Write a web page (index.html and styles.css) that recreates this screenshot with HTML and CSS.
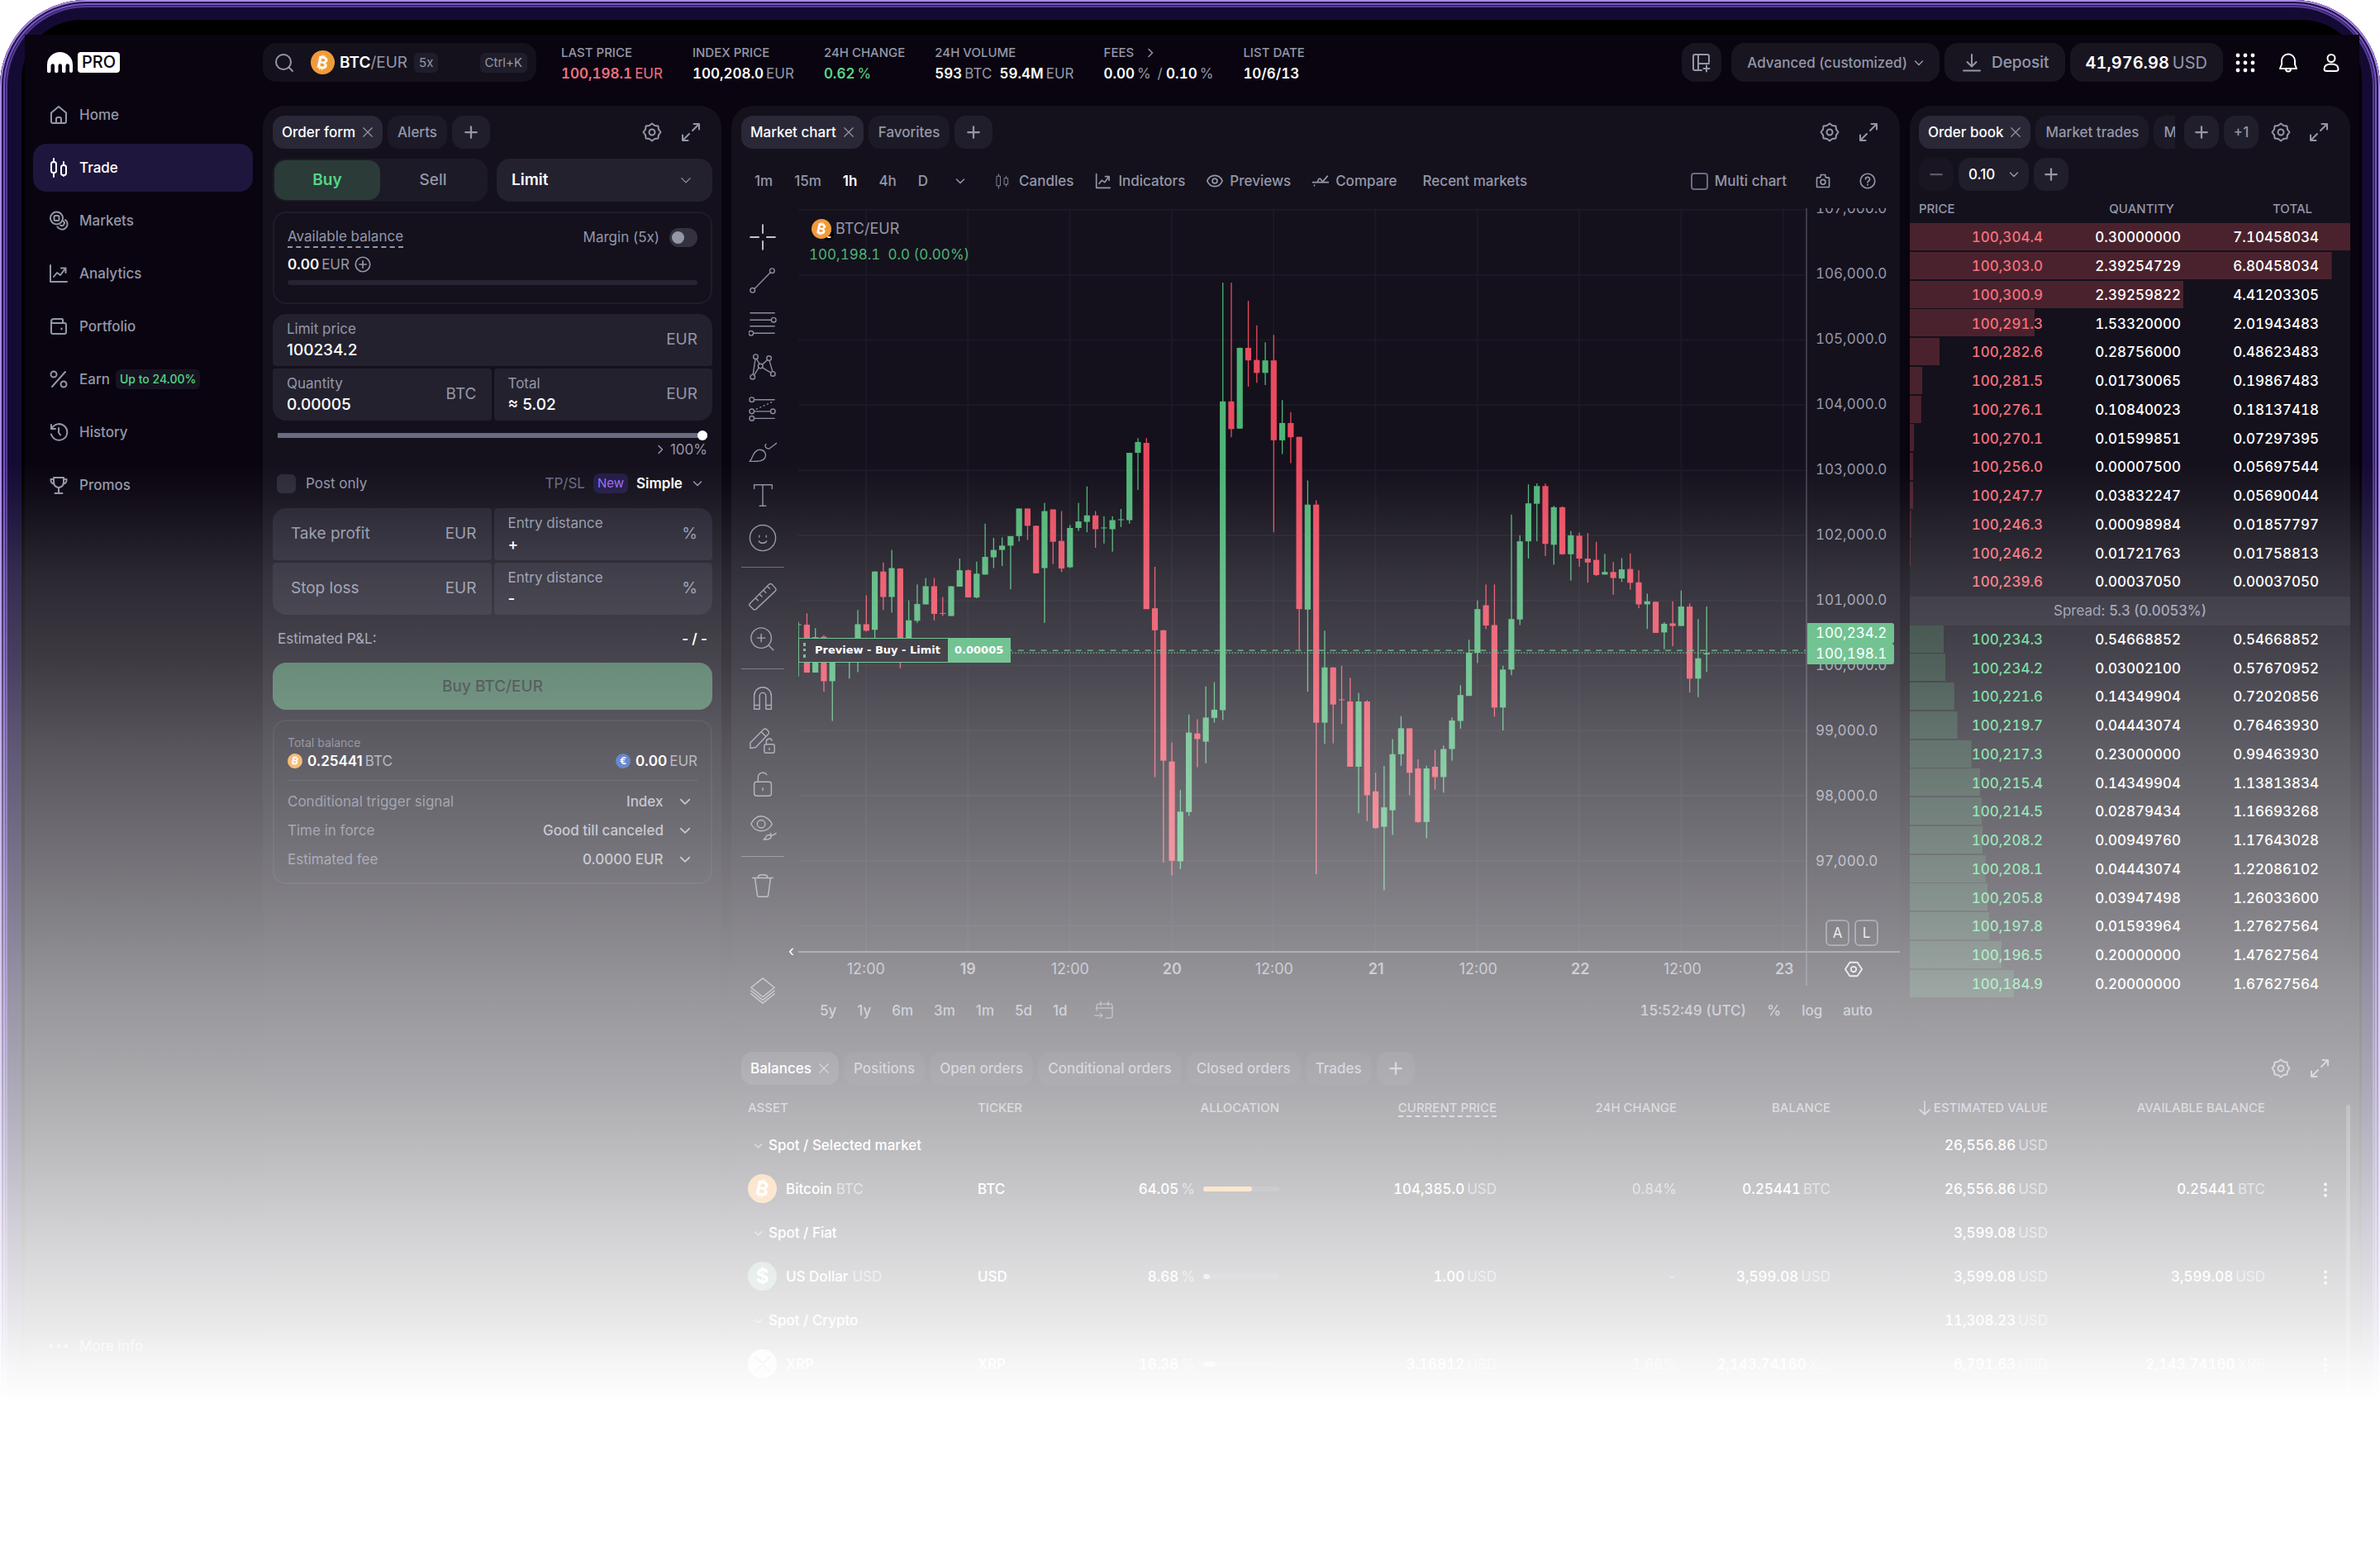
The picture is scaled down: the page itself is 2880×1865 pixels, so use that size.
FILE: index.html
```html
<!DOCTYPE html>
<html lang="en">
<head>
    <meta charset="UTF-8">
    <meta name="viewport" content="width=device-width, initial-scale=1.0">
    <title>BTC/EUR - Pro</title>
    <link rel="stylesheet" href="styles.css">
</head>
<body>
<svg class="sprite" aria-hidden="true">
    <symbol id="i-home" viewBox="0 0 24 24"><path d="M3 9.500 12 2l9 7.500V20a2 2 0 0 1-2 2H5a2 2 0 0 1-2-2z"/><path d="M9 22v-5a2 2 0 0 1 2-2h2a2 2 0 0 1 2 2v5"/></symbol>
    <symbol id="i-trade" viewBox="0 0 24 24"><rect x="3" y="5" width="6" height="13" rx="2.500"/><path d="M6 1v4M6 18v5"/><rect x="15" y="9" width="6" height="12" rx="2.500"/><path d="M18 5v4M18 21v1"/></symbol>
    <symbol id="i-markets" viewBox="0 0 24 24"><circle cx="9.500" cy="9" r="7.500"/><rect x="6.500" y="6" width="6" height="6" rx="1.500"/><path d="M20 11a6.500 6.500 0 1 1-9.500 8.500"/><path d="M17.500 12.500a3 3 0 0 1-3.500 5"/></symbol>
    <symbol id="i-chart" viewBox="0 0 24 24"><path d="M2 2v20h20"/><path d="M6 16l4-5 4 3 6-8"/><path d="M15 5.500h5.500V11"/></symbol>
    <symbol id="i-wallet" viewBox="0 0 24 24"><path d="M3 6v13a2 2 0 0 0 2 2h14a2 2 0 0 0 2-2V10a2 2 0 0 0-2-2H5a2 2 0 0 1-2-2 3 3 0 0 1 3-3h10a1 1 0 0 1 1 1v4"/><path d="M15.500 14.500v1"/></symbol>
    <symbol id="i-percent" viewBox="0 0 24 24"><path d="M20 3 4 21"/><circle cx="6" cy="6" r="3.500"/><circle cx="18" cy="18" r="3.500"/></symbol>
    <symbol id="i-history" viewBox="0 0 24 24"><path d="M3 3v5h5"/><path d="M3.500 8A9.800 9.800 0 1 1 3 14.500"/><path d="M12 7v5.500l2 3"/></symbol>
    <symbol id="i-trophy" viewBox="0 0 24 24"><path d="M6 3h12v6a6 6 0 0 1-12 0z"/><path d="M6 5H2.500v1a4.500 4.500 0 0 0 4 4.500M18 5h3.500v1a4.500 4.500 0 0 1-4 4.500M12 15v6M7.500 22h9"/></symbol>
    <symbol id="i-search" viewBox="0 0 24 24"><circle cx="11" cy="11" r="9"/><path d="M17.500 17.500 22 22"/></symbol>
    <symbol id="i-gear" viewBox="0 0 24 24"><path d="M12 1.500 15.300 4 19.400 4.600 20 8.700 22.500 12 20 15.300 19.400 19.400 15.300 20 12 22.500 8.700 20 4.600 19.400 4 15.300 1.500 12 4 8.700 4.600 4.600 8.700 4z"/><circle cx="12" cy="12" r="3.500"/></symbol>
    <symbol id="i-expand" viewBox="0 0 24 24"><path d="M14 10l8-8M15.500 2H22v6.500M10 14l-8 8M2 15.500V22h6.500"/></symbol>
    <symbol id="i-x" viewBox="0 0 24 24"><path d="M3 3l18 18M21 3 3 21"/></symbol>
    <symbol id="i-plus" viewBox="0 0 24 24"><path d="M12 3v18M3 12h18"/></symbol>
    <symbol id="i-minus" viewBox="0 0 24 24"><path d="M3 12h18"/></symbol>
    <symbol id="i-down" viewBox="0 0 24 24"><path d="M3 8l9 9 9-9"/></symbol>
    <symbol id="i-right" viewBox="0 0 24 24"><path d="M8 3l9 9-9 9"/></symbol>
    <symbol id="i-circle-plus" viewBox="0 0 24 24"><circle cx="12" cy="12" r="10.500"/><path d="M12 7v10M7 12h10"/></symbol>
    <symbol id="i-layout" viewBox="0 0 24 24"><path d="M21 11V4a2 2 0 0 0-2-2H4a2 2 0 0 0-2 2v15a2 2 0 0 0 2 2h8M8 2v19M8 13h13M18 15.500v7M14.500 19h7"/></symbol>
    <symbol id="i-deposit" viewBox="0 0 24 24"><path d="M12 2v14M6.500 11l5.500 5.500 5.500-5.500M2 21.500h20"/></symbol>
    <symbol id="i-apps" viewBox="0 0 24 24"><g fill="currentColor" stroke="none"><circle cx="3" cy="3" r="2.400"/><circle cx="12" cy="3" r="2.400"/><circle cx="21" cy="3" r="2.400"/><circle cx="3" cy="12" r="2.400"/><circle cx="12" cy="12" r="2.400"/><circle cx="21" cy="12" r="2.400"/><circle cx="3" cy="21" r="2.400"/><circle cx="12" cy="21" r="2.400"/><circle cx="21" cy="21" r="2.400"/></g></symbol>
    <symbol id="i-bell" viewBox="0 0 24 24"><path d="M4 9.500a8 8 0 0 1 16 0V14l2 5H2l2-5z"/><path d="M9 19.500a3 3 0 0 0 6 0"/></symbol>
    <symbol id="i-user" viewBox="0 0 24 24"><circle cx="12" cy="6.500" r="4.500"/><path d="M3.500 19.500c0-4 3.500-6 8.500-6s8.500 2 8.500 6c0 2-1.500 2.500-3 2.500h-11c-1.500 0-3-.5-3-2.500z"/></symbol>
    <symbol id="i-candles" viewBox="0 0 24 24"><path d="M4 5h5v14H4zM6.500 2v3M6.500 19v4M15 8h5v9h-5zM17.500 5v3M17.500 17v3"/></symbol>
    <symbol id="i-eye" viewBox="0 0 24 24"><path d="M1 12c2-5 6-8 11-8s9 3 11 8c-2 5-6 8-11 8s-9-3-11-8z"/><circle cx="12" cy="12" r="3.500"/></symbol>
    <symbol id="i-compare" viewBox="0 0 24 24"><path d="M-1 14h26M8 12c2-5 4-4 6 0M15 13l7-8M3 18v1"/></symbol>
    <symbol id="i-camera" viewBox="0 0 24 24"><path d="M4 7h4l1-4h6l1 4h4a1 1 0 0 1 1 1v12a1 1 0 0 1-1 1H4a1 1 0 0 1-1-1V8a1 1 0 0 1 1-1z"/><circle cx="12" cy="13.500" r="3.500"/></symbol>
    <symbol id="i-help" viewBox="0 0 24 24"><circle cx="12" cy="12" r="10.500"/><path d="M9 9.500a3 3 0 1 1 4.500 2.500c-1 .6-1.500 1-1.500 2M12 17v1"/></symbol>
    <symbol id="i-dots" viewBox="0 0 24 24"><g fill="currentColor" stroke="none"><circle cx="3" cy="12" r="2.300"/><circle cx="12" cy="12" r="2.300"/><circle cx="21" cy="12" r="2.300"/></g></symbol>
    <symbol id="i-kebab" viewBox="0 0 24 24"><g fill="currentColor" stroke="none"><circle cx="12" cy="3" r="2.600"/><circle cx="12" cy="12" r="2.600"/><circle cx="12" cy="21" r="2.600"/></g></symbol>
    <symbol id="i-sort" viewBox="0 0 24 24"><path d="M12 1v21M4 14.500l8 8 8-8"/></symbol>
    <symbol id="i-xrp" viewBox="0 0 24 24"><path d="M3 3l5.500 5.500q3.500 3.500 7 0L21 3M3 21l5.500-5.500q3.500-3.500 7 0L21 21"/></symbol>
    <!-- drawing tools -->
    <symbol id="t-cross" viewBox="0 0 36 36"><path d="M18 2v11M18 23v11M2 18h11M23 18h11"/></symbol>
    <symbol id="t-line" viewBox="0 0 36 36"><circle cx="5" cy="31" r="3"/><circle cx="30" cy="6" r="3"/><path d="M7.500 29 28 8"/></symbol>
    <symbol id="t-fib" viewBox="0 0 36 36"><path d="M2 5h31M2 14h27M2 22h31M6 31h27"/><circle cx="32" cy="14" r="3"/><circle cx="3" cy="31" r="3"/></symbol>
    <symbol id="t-pattern" viewBox="0 0 36 36"><circle cx="5" cy="32" r="3"/><circle cx="9" cy="6" r="3"/><circle cx="15" cy="18" r="3"/><circle cx="26" cy="8" r="3"/><circle cx="31" cy="28" r="3"/><path d="M5.500 29 8.500 9M10 9l4 6.500M17.500 16 24 10M26.500 11l4 14M17.500 20l11 6.500M13 20 7 29.500"/></symbol>
    <symbol id="t-range" viewBox="0 0 36 36"><circle cx="4" cy="6" r="3"/><circle cx="4" cy="21" r="3"/><circle cx="4" cy="30" r="3"/><circle cx="31" cy="21" r="3"/><path d="M7 6h26M7 21h21M7 30h26"/><path d="M10 18 30 9" stroke-dasharray="1 4"/></symbol>
    <symbol id="t-brush" viewBox="0 0 36 36"><path d="M1 30c4-2 4-14 13-15 6 0 9 5 7 10-3 6-12 5-20 5zM22 8c-2 3 0 6 4 6L38 5"/></symbol>
    <symbol id="t-text" viewBox="0 0 36 36"><path d="M7 10V5h23v5M18 5v27M14 32h8"/></symbol>
    <symbol id="t-smile" viewBox="0 0 36 36"><circle cx="18" cy="18" r="16.500"/><path d="M13 22c2 3.500 8 3.500 10 0M13.500 15v2M22.500 15v2"/></symbol>
    <symbol id="t-ruler" viewBox="0 0 36 36"><path d="M1.500 27 26 2.500q2-2 4 0L34 7q2 2 0 4L9.500 34q-2 1.500-4 0L1.500 30q-1.500-1.500 0-3zM9 20l3 3M14 15l3 3M19 10l3 3M24 5l3 3"/></symbol>
    <symbol id="t-zoom" viewBox="0 0 36 36"><circle cx="16" cy="16" r="13"/><path d="M25.500 25.500l6 6M16 11v10M11 16h10"/></symbol>
    <symbol id="t-magnet" viewBox="0 0 36 36"><path d="M7 32V15a11 11 0 0 1 22 0v17h-7V15a4 4 0 0 0-8 0v17zM7 27h7M22 27h7"/></symbol>
    <symbol id="t-pencil" viewBox="0 0 36 36"><path d="M2 27v-7L19 3q2-2 4 0l2 2q2 2 0 4L9 26zM16 6l6 6"/><rect x="20" y="22" width="13" height="11" rx="2"/><path d="M22.500 22v-3a4 4 0 0 1 7.500-2M26.500 27v2"/></symbol>
    <symbol id="t-lock" viewBox="0 0 36 36"><rect x="7" y="15" width="22" height="18" rx="3"/><path d="M12 15v-6a6 6 0 0 1 11-3M18 23v3"/></symbol>
    <symbol id="t-hide" viewBox="0 0 36 36"><path d="M3 14c3-6 8-10 13-10s11 4 14 10c-3 6-8 9-14 9S6 20 3 14z"/><circle cx="16" cy="14" r="5"/><path d="M19 34c3-1 3-6 6-6s5 2 3 4-6 2-9 2zM28 26c0 2 2 3 4 2l3-2"/></symbol>
    <symbol id="t-trash" viewBox="0 0 36 36"><path d="M5 8h26M12 8q0-4 4-4h4q4 0 4 4M8 8l3 22q.3 2 2 2h10q2 0 2-2L28 8"/></symbol>
    <symbol id="t-layers" viewBox="0 0 36 36"><path d="M18 2 33 14 18 26 3 14zM3 18l15 12 15-12M3 22l15 12 15-12"/></symbol>
    <symbol id="t-goto" viewBox="0 0 24 24"><path d="M3 12V6q0-2 2-2h15q2 0 2 2v13q0 2-2 2h-6M3 9h19M8 1v5M17 1v5M0 18h10M7 15l3 3-3 3"/></symbol>
    <symbol id="t-hex" viewBox="0 0 24 24"><path d="M7 3h10l6 9-6 9H7l-6-9z"/><circle cx="12" cy="12" r="3.500"/></symbol>
</svg>

<div class="device">
<div class="screen">
<div class="app">
    <aside class="sidebar">
        <a class="logo" href="#" aria-label="Pro">
            <svg viewBox="0 0 31 25"><path d="M0 15.500a15.500 15.500 0 0 1 31 0V23a2 2 0 0 1-4 0v-6.500a2.200 2.200 0 0 0-4.500 0V23a2 2 0 0 1-4.500 0v-6.500a2.200 2.200 0 0 0-4.500 0V23a2 2 0 0 1-4.500 0v-6.500a2.200 2.200 0 0 0-4.500 0V23a2 2 0 0 1-4.500 0z"/></svg>
            <span>PRO</span>
        </a>
        <nav class="nav">
            <a href="#"><svg class="icon"><use href="#i-home"/></svg>Home</a>
            <a href="#" class="active"><svg class="icon"><use href="#i-trade"/></svg>Trade</a>
            <a href="#"><svg class="icon"><use href="#i-markets"/></svg>Markets</a>
            <a href="#"><svg class="icon"><use href="#i-chart"/></svg>Analytics</a>
            <a href="#"><svg class="icon"><use href="#i-wallet"/></svg>Portfolio</a>
            <a href="#"><svg class="icon"><use href="#i-percent"/></svg>Earn <span class="earn-badge">Up to 24.00%</span></a>
            <a href="#"><svg class="icon"><use href="#i-history"/></svg>History</a>
            <a href="#"><svg class="icon"><use href="#i-trophy"/></svg>Promos</a>
            <a href="#" class="more"><svg class="icon"><use href="#i-dots"/></svg>More info</a>
        </nav>
    </aside>

    <main class="main">
        <header class="topbar">
            <button class="market-search">
                <svg class="icon"><use href="#i-search"/></svg>
                <span class="coin coin-m btc">₿</span>
                <span class="pair"><b>BTC</b>/EUR</span>
                <span class="tag">5x</span>
                <span class="tag shortcut">Ctrl+K</span>
            </button>
            <dl class="stats">
                <div><dt>LAST PRICE</dt><dd class="num red">100,198.1<i>EUR</i></dd></div>
                <div><dt>INDEX PRICE</dt><dd class="num">100,208.0<i>EUR</i></dd></div>
                <div><dt>24H CHANGE</dt><dd class="num green">0.62<i>%</i></dd></div>
                <div><dt>24H VOLUME</dt><dd class="num">593<i>BTC</i> &nbsp;59.4M<i>EUR</i></dd></div>
                <div><dt>FEES <svg class="icon tiny"><use href="#i-right"/></svg></dt><dd class="num">0.00<i>%</i> <i>/</i> 0.10<i>%</i></dd></div>
                <div><dt>LIST DATE</dt><dd class="num">10/6/13</dd></div>
            </dl>
            <div class="actions">
                <button class="pill square" aria-label="Layout"><svg class="icon"><use href="#i-layout"/></svg></button>
                <button class="pill layout-name">Advanced (customized) <svg class="icon tiny"><use href="#i-down"/></svg></button>
                <button class="pill deposit"><svg class="icon"><use href="#i-deposit"/></svg>Deposit</button>
                <button class="pill balance"><span class="num">41,976.98</span><i>USD</i></button>
                <button class="plain" aria-label="Apps"><svg class="icon"><use href="#i-apps"/></svg></button>
                <button class="plain" aria-label="Notifications"><svg class="icon"><use href="#i-bell"/></svg></button>
                <button class="plain" aria-label="Account"><svg class="icon"><use href="#i-user"/></svg></button>
            </div>
        </header>

        <div class="workspace">
            <section class="panel order-panel">
                <div class="tabs">
                    <button class="chip active">Order form <svg class="icon tiny"><use href="#i-x"/></svg></button>
                    <button class="chip">Alerts</button>
                    <button class="chip add" aria-label="Add"><svg class="icon"><use href="#i-plus"/></svg></button>
                    <span class="panel-tools">
                        <button class="plain" aria-label="Settings"><svg class="icon"><use href="#i-gear"/></svg></button>
                        <button class="plain" aria-label="Expand"><svg class="icon"><use href="#i-expand"/></svg></button>
                    </span>
                </div>
                <form class="order-form">
                    <div class="side-row">
                        <div class="side-switch">
                            <button type="button" class="buy">Buy</button>
                            <button type="button">Sell</button>
                        </div>
                        <div class="order-type">
                            <select aria-label="Order type"><option>Limit</option></select>
                            <svg class="icon"><use href="#i-down"/></svg>
                        </div>
                    </div>
                    <div class="available">
                        <div class="line">
                            <span class="dashed">Available balance</span>
                            <label class="margin">Margin (5x) <input type="checkbox" class="toggle"></label>
                        </div>
                        <div class="line amount"><span><b>0.00</b><i>EUR</i></span><svg class="icon"><use href="#i-circle-plus"/></svg></div>
                        <div class="usage"></div>
                    </div>
                    <div class="fields">
                        <label class="field wide"><span class="name">Limit price</span><input type="text" value="100234.2"><span class="unit">EUR</span></label>
                        <label class="field"><span class="name">Quantity</span><input type="text" value="0.00005"><span class="unit">BTC</span></label>
                        <label class="field"><span class="name">Total</span><input type="text" value="≈ 5.02"><span class="unit">EUR</span></label>
                    </div>
                    <div class="slider">
                        <input type="range" min="0" max="100" value="100" aria-label="Share of balance">
                        <span><svg class="icon tiny"><use href="#i-right"/></svg>100%</span>
                    </div>
                    <div class="options">
                        <label class="post-only"><input type="checkbox">Post only</label>
                        <span class="tpsl">TP/SL</span>
                        <span class="new">New</span>
                        <span class="mini-select"><select aria-label="TP/SL mode"><option>Simple</option></select><svg class="icon tiny"><use href="#i-down"/></svg></span>
                    </div>
                    <div class="fields">
                        <label class="field single"><input type="text" placeholder="Take profit" aria-label="Take profit"><span class="unit">EUR</span></label>
                        <label class="field"><span class="name">Entry distance</span><input type="text" value="+"><span class="unit">%</span></label>
                        <label class="field single"><input type="text" placeholder="Stop loss" aria-label="Stop loss"><span class="unit">EUR</span></label>
                        <label class="field"><span class="name">Entry distance</span><input type="text" value="-"><span class="unit">%</span></label>
                    </div>
                    <div class="pnl"><span>Estimated P&amp;L:</span><b>- / -</b></div>
                    <button type="button" class="submit">Buy BTC/EUR</button>
                    <div class="summary">
                        <div class="small">Total balance</div>
                        <div class="line totals">
                            <span><span class="coin coin-s btc">₿</span><b>0.25441</b><i>BTC</i></span>
                            <span><span class="coin coin-s eur">€</span><b>0.00</b><i>EUR</i></span>
                        </div>
                        <div class="setting"><label for="trigger">Conditional trigger signal</label><select id="trigger"><option>Index</option></select><svg class="icon"><use href="#i-down"/></svg></div>
                        <div class="setting"><label for="tif">Time in force</label><select id="tif"><option>Good till canceled</option></select><svg class="icon"><use href="#i-down"/></svg></div>
                        <div class="setting"><label for="fee">Estimated fee</label><select id="fee"><option>0.0000 EUR</option></select><svg class="icon"><use href="#i-down"/></svg></div>
                    </div>
                </form>
            </section>

            <section class="panel chart-panel">
                <div class="tabs">
                    <button class="chip active">Market chart <svg class="icon tiny"><use href="#i-x"/></svg></button>
                    <button class="chip">Favorites</button>
                    <button class="chip add" aria-label="Add"><svg class="icon"><use href="#i-plus"/></svg></button>
                    <span class="panel-tools">
                        <button class="plain" aria-label="Settings"><svg class="icon"><use href="#i-gear"/></svg></button>
                        <button class="plain" aria-label="Expand"><svg class="icon"><use href="#i-expand"/></svg></button>
                    </span>
                </div>
                <div class="chart-bar">
                    <div class="intervals">
                        <button>1m</button><button>15m</button><button class="active">1h</button><button>4h</button><button>D</button>
                        <button aria-label="More intervals"><svg class="icon tiny"><use href="#i-down"/></svg></button>
                    </div>
                    <button class="candle-btn"><svg class="icon thin"><use href="#i-candles"/></svg>Candles</button>
                    <button><svg class="icon"><use href="#i-chart"/></svg>Indicators</button>
                    <button><svg class="icon"><use href="#i-eye"/></svg>Previews</button>
                    <button><svg class="icon"><use href="#i-compare"/></svg>Compare</button>
                    <button class="recent">Recent markets</button>
                    <div class="chart-extra">
                        <label class="multi"><input type="checkbox">Multi chart</label>
                        <button aria-label="Snapshot"><svg class="icon"><use href="#i-camera"/></svg></button>
                        <button aria-label="Help"><svg class="icon"><use href="#i-help"/></svg></button>
                    </div>
                </div>
                <div class="chart-body">
                    <div class="tools">
                        <button class="on" aria-label="Cursor"><svg class="tool"><use href="#t-cross"/></svg></button>
                        <button aria-label="Trend line"><svg class="tool"><use href="#t-line"/></svg></button>
                        <button aria-label="Fibonacci"><svg class="tool"><use href="#t-fib"/></svg></button>
                        <button aria-label="Patterns"><svg class="tool"><use href="#t-pattern"/></svg></button>
                        <button aria-label="Forecast"><svg class="tool"><use href="#t-range"/></svg></button>
                        <button aria-label="Brush"><svg class="tool"><use href="#t-brush"/></svg></button>
                        <button aria-label="Text"><svg class="tool"><use href="#t-text"/></svg></button>
                        <button aria-label="Emoji"><svg class="tool"><use href="#t-smile"/></svg></button>
                        <hr>
                        <button aria-label="Measure"><svg class="tool"><use href="#t-ruler"/></svg></button>
                        <button aria-label="Zoom in"><svg class="tool"><use href="#t-zoom"/></svg></button>
                        <hr>
                        <button aria-label="Magnet"><svg class="tool"><use href="#t-magnet"/></svg></button>
                        <button aria-label="Stay in drawing mode"><svg class="tool"><use href="#t-pencil"/></svg></button>
                        <button aria-label="Lock"><svg class="tool"><use href="#t-lock"/></svg></button>
                        <button aria-label="Hide"><svg class="tool"><use href="#t-hide"/></svg></button>
                        <hr>
                        <button aria-label="Remove"><svg class="tool"><use href="#t-trash"/></svg></button>
                        <button class="last" aria-label="Object tree"><svg class="tool"><use href="#t-layers"/></svg></button>
                    </div>
                    <div class="plot">
                        <svg id="candles" viewBox="0 0 1220 900" preserveAspectRatio="none"></svg>
                        <div class="legend">
                            <div class="legend-pair"><span class="coin coin-l btc">₿</span><span class="coin coin-over">€</span>BTC/EUR</div>
                            <div class="legend-price">100,198.1&nbsp; 0.0 (0.00%)</div>
                        </div>
                        <div class="preview"><span class="grip"></span><span class="what">Preview - Buy - Limit</span><span class="qty">0.00005</span></div>
                    </div>
                    <div class="price-axis">
                        <div class="prices">
                            <span>107,000.0</span><span>106,000.0</span><span>105,000.0</span><span>104,000.0</span><span>103,000.0</span><span>102,000.0</span><span>101,000.0</span><span>100,000.0</span><span>99,000.0</span><span>98,000.0</span><span>97,000.0</span>
                        </div>
                        <div class="price-tags"><span>100,234.2</span><span>100,198.1</span></div>
                        <div class="scale-buttons"><button>A</button><button>L</button></div>
                    </div>
                    <div class="time-axis">
                        <span>12:00</span><b>19</b><span>12:00</span><b>20</b><span>12:00</span><b>21</b><span>12:00</span><b>22</b><span>12:00</span><b>23</b>
                        <em>‹</em>
                    </div>
                    <div class="axis-corner"><svg class="icon"><use href="#t-hex"/></svg></div>
                    <div class="range-bar">
                        <button>5y</button><button>1y</button><button>6m</button><button>3m</button><button>1m</button><button>5d</button><button>1d</button>
                        <button aria-label="Go to date"><svg class="icon thin"><use href="#t-goto"/></svg></button>
                        <span class="clock">15:52:49 (UTC)</span>
                        <button>%</button><button>log</button><button>auto</button>
                    </div>
                </div>
            </section>

            <section class="panel book-panel">
                <div class="tabs">
                    <div class="tab-scroll">
                        <button class="chip active">Order book <svg class="icon tiny"><use href="#i-x"/></svg></button>
                        <button class="chip">Market trades</button>
                        <button class="chip">M</button>
                    </div>
                    <button class="chip add" aria-label="Add"><svg class="icon"><use href="#i-plus"/></svg></button>
                    <button class="chip add">+1</button>
                    <span class="panel-tools">
                        <button class="plain" aria-label="Settings"><svg class="icon"><use href="#i-gear"/></svg></button>
                        <button class="plain" aria-label="Expand"><svg class="icon"><use href="#i-expand"/></svg></button>
                    </span>
                </div>
                <div class="grouping">
                    <button class="chip add off" aria-label="Finer"><svg class="icon"><use href="#i-minus"/></svg></button>
                    <span class="chip step"><select aria-label="Price grouping"><option>0.10</option></select><svg class="icon tiny"><use href="#i-down"/></svg></span>
                    <button class="chip add" aria-label="Coarser"><svg class="icon"><use href="#i-plus"/></svg></button>
                </div>
                <table class="book">
                    <thead><tr><th>PRICE</th><th>QUANTITY</th><th>TOTAL</th></tr></thead>
                    <tbody id="asks"></tbody>
                    <tbody><tr class="spread"><td colspan="3">Spread: <b>5.3 (0.0053%)</b></td></tr></tbody>
                    <tbody id="bids"></tbody>
                </table>
            </section>

            <section class="panel balances-panel">
                <div class="tabs">
                    <button class="chip active">Balances <svg class="icon tiny"><use href="#i-x"/></svg></button>
                    <button class="chip">Positions</button>
                    <button class="chip">Open orders</button>
                    <button class="chip">Conditional orders</button>
                    <button class="chip">Closed orders</button>
                    <button class="chip">Trades</button>
                    <button class="chip add" aria-label="Add"><svg class="icon"><use href="#i-plus"/></svg></button>
                    <span class="panel-tools">
                        <button class="plain" aria-label="Settings"><svg class="icon"><use href="#i-gear"/></svg></button>
                        <button class="plain" aria-label="Expand"><svg class="icon"><use href="#i-expand"/></svg></button>
                    </span>
                </div>
                <table class="balances">
                    <colgroup><col><col class="c-ticker"><col class="c-alloc"><col class="c-wide"><col class="c-change"><col class="c-bal"><col class="c-wide"><col class="c-wide"><col class="c-menu"></colgroup>
                    <thead>
                        <tr><th class="l">ASSET</th><th class="l">TICKER</th><th>ALLOCATION</th><th><span class="dashed">CURRENT PRICE</span></th><th>24H CHANGE</th><th>BALANCE</th><th><svg class="icon"><use href="#i-sort"/></svg>ESTIMATED VALUE</th><th>AVAILABLE BALANCE</th><th></th></tr>
                    </thead>
                    <tbody>
                        <tr class="group"><td class="l" colspan="6"><svg class="icon tiny"><use href="#i-down"/></svg>Spot / Selected market</td><td class="num">26,556.86<i>USD</i></td><td></td><td></td></tr>
                        <tr><td class="l"><span class="asset"><span class="coin coin-xl btc">₿</span>Bitcoin <i>BTC</i></span></td><td class="l">BTC</td>
                            <td><span class="alloc"><span class="num">64.05<i>%</i></span><span class="meter"><span class="fill" style="width: 64%"></span></span></span></td>
                            <td class="num">104,385.0<i>USD</i></td><td class="num"><i>0.84%</i></td><td class="num">0.25441<i>BTC</i></td><td class="num">26,556.86<i>USD</i></td><td class="num">0.25441<i>BTC</i></td><td class="menu"><svg class="icon"><use href="#i-kebab"/></svg></td></tr>
                        <tr class="group"><td class="l" colspan="6"><svg class="icon tiny"><use href="#i-down"/></svg>Spot / Fiat</td><td class="num">3,599.08<i>USD</i></td><td></td><td></td></tr>
                        <tr><td class="l"><span class="asset"><span class="coin coin-xl usd">$</span>US Dollar <i>USD</i></span></td><td class="l">USD</td>
                            <td><span class="alloc"><span class="num">8.68<i>%</i></span><span class="meter"><span class="fill gray" style="width: 9%"></span></span></span></td>
                            <td class="num">1.00<i>USD</i></td><td class="num"><i>-</i></td><td class="num">3,599.08<i>USD</i></td><td class="num">3,599.08<i>USD</i></td><td class="num">3,599.08<i>USD</i></td><td class="menu"><svg class="icon"><use href="#i-kebab"/></svg></td></tr>
                        <tr class="group"><td class="l" colspan="6"><svg class="icon tiny"><use href="#i-down"/></svg>Spot / Crypto</td><td class="num">11,308.23<i>USD</i></td><td></td><td></td></tr>
                        <tr><td class="l"><span class="asset"><span class="coin coin-xl xrp"><svg class="icon"><use href="#i-xrp"/></svg></span>XRP</span></td><td class="l">XRP</td>
                            <td><span class="alloc"><span class="num">16.38<i>%</i></span><span class="meter"><span class="fill gray" style="width: 16%"></span></span></span></td>
                            <td class="num">3.16812<i>USD</i></td><td class="num"><i>1.86%</i></td><td class="num">2,143.74160<i>X…</i></td><td class="num">6,791.63<i>USD</i></td><td class="num">2,143.74160<i>XRP</i></td><td class="menu"><svg class="icon"><use href="#i-kebab"/></svg></td></tr>
                    </tbody>
                </table>
                <div class="scrollbar"></div>
            </section>
        </div>
    </main>
</div>
</div>
<div class="fade"></div>
</div>
<script src="chart.js"></script>
</body>
</html>
```
FILE: styles.css
```css
* {
    box-sizing: border-box;
}
body {
    margin: 0;
    background: #fff;
    color: #fff;
    font-family: Inter, "Liberation Sans", sans-serif;
    font-size: 17px;
    line-height: 24px;
}
button, input, select {
    font: inherit;
    color: inherit;
    background: none;
    border: 0;
    margin: 0;
    padding: 0;
}
select {
    appearance: none;
}
a {
    color: inherit;
    text-decoration: none;
}
i {
    font-style: normal;
    font-weight: 400;
    color: #9497a9;
}
b {
    font-weight: 600;
}
.sprite {
    display: none;
}
.icon, .tool {
    width: 24px;
    height: 24px;
    flex: none;
    fill: none;
    stroke: currentColor;
    stroke-width: 2;
    stroke-linecap: round;
    stroke-linejoin: round;
    overflow: visible;
}
.icon.tiny {
    width: 12px;
    height: 12px;
    stroke-width: 3;
}
.icon.thin {
    stroke-width: 1;
}
.num {
    font-feature-settings: "tnum";
    font-weight: 500;
}
.red, .red i {
    color: #f4707e;
}
.green, .green i {
    color: #57d48a;
}

/* device frame */
.device {
    position: relative;
    height: 100vh;
    padding: 24px 22px 0 26px;
    border-radius: 104px 104px 0 0;
    background: #150a34;
    box-shadow: inset 0 0 0 2px #a98ae6, inset 0 0 0 4px #221145, inset 0 0 0 6px #7556be, inset 0 0 0 7px #2a1756, inset 0 0 0 9px #523a94;
    overflow: hidden;
}
.screen {
    height: 100%;
    padding: 18px 3px 0 4px;
    border-radius: 72px 72px 0 0;
    background: #000;
}
.fade {
    position: absolute;
    inset: 0;
    pointer-events: none;
    background: linear-gradient(rgba(255,255,255,0) 30%, rgba(255,255,255,.03) 32%, rgba(255,255,255,.14) 37.500%, rgba(255,255,255,.22) 43%, rgba(255,255,255,.31) 48%, rgba(255,255,255,.39) 53.500%, rgba(255,255,255,.47) 59%, rgba(255,255,255,.56) 64.500%, rgba(255,255,255,.64) 70%, rgba(255,255,255,.72) 75%, rgba(255,255,255,.82) 80.500%, rgba(255,255,255,.91) 86%, rgba(255,255,255,.96) 88.500%, #fff 91%);
}
.app {
    display: grid;
    grid-template-columns: 288px minmax(0, 1fr);
    height: 100%;
    background: linear-gradient(#09040f 45%, #12101a 62%);
}

/* sidebar */
.sidebar {
    display: flex;
    flex-direction: column;
    padding: 21px 12px 211px 10px;
}
.logo {
    display: flex;
    gap: 6px;
    height: 47px;
    padding-left: 17px;
}
.logo svg {
    width: 31px;
    height: 25px;
    fill: #fff;
}
.logo span {
    height: 25px;
    padding: 0 5px;
    border-radius: 4px;
    background: #fff;
    color: #09040f;
    font-size: 20px;
    font-weight: 500;
    line-height: 25px;
}
.nav {
    display: flex;
    flex-direction: column;
    gap: 6px;
    flex: 1;
}
.nav a {
    display: flex;
    align-items: center;
    gap: 13px;
    height: 58px;
    padding: 0 19px;
    border-radius: 16px;
    color: #9497a9;
    font-weight: 500;
}
.nav .active {
    background: #1e163d;
    color: #fff;
}
.nav .more {
    margin-top: auto;
}
.earn-badge {
    margin-left: -6px;
    padding: 0 5px;
    border-radius: 6px;
    background: #161420;
    color: #57d48a;
    font-size: 14px;
}

/* top bar */
.main {
    display: flex;
    flex-direction: column;
    padding-right: 11px;
}
.topbar {
    display: flex;
    align-items: flex-start;
    height: 86px;
    padding-top: 10px;
}
.market-search {
    display: flex;
    align-items: center;
    width: 331px;
    height: 47px;
    padding: 0 11px 0 14px;
    border-radius: 16px;
    background: #14111c;
    color: #9497a9;
}
.market-search .coin {
    margin: 0 6px 0 20px;
}
.pair {
    font-size: 19px;
}
.pair b {
    color: #fff;
}
.tag {
    margin-left: 8px;
    padding: 0 6px;
    border-radius: 6px;
    background: #1f1d2a;
    font-size: 15px;
}
.shortcut {
    margin-left: auto;
}
.coin {
    display: inline-flex;
    align-items: center;
    justify-content: center;
    flex: none;
    border-radius: 50%;
    color: #fff;
    font-weight: 700;
    line-height: 1;
}
.coin-s { width: 18px; height: 18px; font-size: 12px; margin-right: 6px; }
.coin-l { width: 24px; height: 24px; font-size: 17px; }
.coin-m { width: 29px; height: 29px; font-size: 20px; }
.coin-xl { width: 35px; height: 35px; font-size: 24px; }
.coin.btc { transform: rotate(12deg); }
.btc { background: #f29a38; }
.eur { background: #1f4fb5; }
.usd { background: #5c8f7c; }
.xrp { background: #d8d8dc; color: #33313c; }
.stats {
    display: flex;
    gap: 36px;
    margin: 0 0 0 30px;
}
.stats dt {
    display: flex;
    align-items: center;
    gap: 14px;
    color: #9497a9;
    font-size: 15px;
    font-weight: 500;
}
.stats dd {
    margin: 1px 0 0;
}
.num i {
    margin-left: 3px;
}
.stats .num {
    font-weight: 600;
}
.actions {
    display: flex;
    align-items: center;
    gap: 6px;
    height: 47px;
    margin-left: auto;
    padding-right: 11px;
}
.pill {
    display: flex;
    align-items: center;
    height: 47px;
    padding: 0 19px;
    border-radius: 16px;
    background: #181521;
    color: #9497a9;
}
.pill.square {
    padding: 0 12px;
    margin-right: 6px;
}
.layout-name {
    gap: 8px;
    font-weight: 500;
}
.deposit {
    gap: 12px;
    padding: 0 19px 0 21px;
    font-size: 19px;
    font-weight: 500;
}
.balance {
    margin-right: 9px;
    font-size: 20px;
}
.balance .num {
    color: #fff;
    font-weight: 600;
}
.balance i {
    margin-left: 4px;
}
.plain {
    display: flex;
}
.actions .plain + .plain {
    margin-left: 22px;
}

/* panels */
.workspace {
    display: grid;
    grid-template-columns: 555px minmax(0, 1fr) 533px;
    grid-template-rows: minmax(0, 24fr) minmax(0, 13fr);
    gap: 12px;
    flex: 1;
    min-height: 0;
}
.panel {
    display: flex;
    flex-direction: column;
    padding: 12px 11px 0 12px;
    border-radius: 26px;
    background: #14111c;
    overflow: hidden;
}
.order-panel {
    grid-row: span 2;
    border-radius: 26px 26px 0 0;
}
.balances-panel {
    position: relative;
    grid-column: 2 / 4;
}
.tabs {
    display: flex;
    align-items: center;
    gap: 6px;
    flex: none;
    height: 40px;
}
.chip {
    display: flex;
    align-items: center;
    gap: 8px;
    flex: none;
    height: 40px;
    padding: 0 12px;
    border-radius: 14px;
    background: #1d1a27;
    color: #9497a9;
    font-weight: 500;
}
.chip.active {
    padding: 0 11px;
    background: #2a2837;
    color: #fff;
}
.chip.active .icon {
    width: 14px;
    height: 14px;
    color: #9497a9;
    stroke-width: 2;
}
.chip.add {
    justify-content: center;
    width: 46px;
    padding: 0;
    background: #201e2b;
}
.chip.add .icon {
    width: 18px;
    height: 18px;
    stroke-width: 3;
}
.panel-tools {
    display: flex;
    gap: 23px;
    margin-left: auto;
    padding-right: 14px;
    color: #9497a9;
}

/* order form */
.order-form {
    display: flex;
    flex-direction: column;
    gap: 12px;
    margin-top: 12px;
}
.side-row {
    display: grid;
    grid-template-columns: 260px minmax(0, 1fr);
    gap: 11px;
    height: 52px;
    font-size: 19px;
}
.side-switch {
    display: grid;
    grid-template-columns: 1fr 1fr;
    padding: 2px;
    border-radius: 16px;
    background: #1d1a27;
    color: #9497a9;
}
.side-switch button {
    border-radius: 14px;
    font-weight: 500;
}
.side-switch .buy {
    background: #2a3b38;
    color: #57d48a;
    font-weight: 600;
}
.order-type {
    display: grid;
    align-items: center;
    border-radius: 16px;
    background: #23212e;
    font-weight: 600;
}
.order-type > * {
    grid-area: 1 / 1;
}
.order-type select {
    width: 100%;
    height: 52px;
    padding: 0 18px;
}
.order-type .icon {
    justify-self: end;
    width: 14px;
    height: 14px;
    margin-right: 25px;
    color: #9497a9;
    pointer-events: none;
}
.available, .summary {
    padding: 16px 16px 0;
    border: 2px solid #1f1d2a;
    border-radius: 16px;
    color: #9497a9;
}
.available {
    height: 112px;
}
.line {
    display: flex;
    align-items: center;
    justify-content: space-between;
}
.dashed {
    border-bottom: 2px dashed #9497a9;
}
.margin {
    display: flex;
    align-items: center;
    gap: 12px;
}
.toggle {
    appearance: none;
    width: 34px;
    height: 23px;
    padding: 4px 3px;
    border-radius: 12px;
    background: #34323f;
}
.toggle::before {
    content: "";
    display: block;
    width: 15px;
    height: 15px;
    border-radius: 50%;
    background: #9497a9;
}
.amount {
    justify-content: flex-start;
    gap: 6px;
    margin-top: 8px;
}
.amount .icon {
    width: 20px;
    height: 20px;
}
.line b {
    color: #fff;
}
.line i {
    margin-left: 3px;
}
.usage {
    height: 6px;
    margin-top: 7px;
    border-radius: 3px;
    background: #262433;
}
.fields {
    display: grid;
    grid-template-columns: 1fr 1fr;
    gap: 3px;
    border-radius: 16px;
    overflow: hidden;
}
.field {
    display: grid;
    grid-template-columns: minmax(0, 1fr) auto;
    align-content: center;
    align-items: center;
    height: 63px;
    padding: 0 18px 1px 17px;
    border-radius: 4px;
    background: #23212e;
    color: #9497a9;
}
.field.wide {
    grid-column: span 2;
}
.field .unit {
    grid-area: 1 / 2 / 3 / 3;
    font-size: 19px;
}
.field .name {
    line-height: 26px;
}
.field input {
    width: 100%;
    grid-column: 1;
    color: #fff;
    font-size: 19px;
    font-weight: 500;
    line-height: 26px;
}
.field.single input {
    padding-left: 5px;
    grid-row: 1 / 3;
}
.field input::placeholder {
    color: #9497a9;
    font-weight: 400;
    opacity: 1;
}
.slider {
    display: flex;
    flex-direction: column;
    align-items: flex-end;
    padding: 0 6px;
    color: #9497a9;
}
.slider input {
    appearance: none;
    width: 100%;
    height: 12px;
    background: linear-gradient(#686b82, #686b82) no-repeat center / 100% 6px;
    border-radius: 3px;
}
.slider input::-webkit-slider-thumb {
    appearance: none;
    width: 12px;
    height: 12px;
    border-radius: 50%;
    background: #fff;
}
.slider span {
    display: flex;
    align-items: center;
    gap: 6px;
    height: 22px;
}
.options {
    display: flex;
    align-items: center;
    height: 36px;
    padding: 0 12px 0 5px;
    color: #9497a9;
}
.post-only {
    display: flex;
    align-items: center;
    gap: 12px;
    margin-right: auto;
}
.post-only input {
    appearance: none;
    width: 23px;
    height: 23px;
    border-radius: 6px;
    background: #2c2a37;
}
.tpsl {
    color: #686b82;
}
.new {
    margin: 0 10px;
    padding: 0 5px;
    border-radius: 7px;
    background: #231b46;
    color: #9a6df0;
    font-size: 15px;
}
.mini-select {
    display: flex;
    align-items: center;
    gap: 12px;
}
.mini-select select {
    color: #fff;
    font-weight: 600;
}
.pnl {
    display: flex;
    align-items: center;
    justify-content: space-between;
    height: 34px;
    padding: 0 6px;
    color: #9497a9;
}
.pnl b {
    color: #fff;
}
.submit {
    height: 57px;
    border-radius: 16px;
    background: #3f6b54;
    color: #1f2b2b;
    font-size: 19px;
    font-weight: 500;
}
.summary {
    padding-bottom: 11px;
}
.small {
    font-size: 14px;
    line-height: 20px;
    color: #686b82;
}
.totals {
    height: 36px;
    margin-bottom: 7px;
    padding-bottom: 12px;
    border-bottom: 1px solid #292735;
}
.totals > span {
    display: flex;
    align-items: center;
}
.setting {
    display: flex;
    align-items: center;
    height: 35px;
    padding-right: 8px;
    color: #6f7287;
}
.setting select {
    margin-left: auto;
    color: #a5a7b6;
    font-weight: 500;
}
.setting .icon {
    width: 14px;
    height: 14px;
    margin-left: 19px;
    color: #a5a7b6;
    stroke-width: 3;
}

/* chart */
.chart-panel {
    padding-left: 0;
    padding-right: 0;
}
.chart-panel .tabs {
    padding: 0 12px;
}
.chart-bar {
    display: flex;
    align-items: center;
    gap: 26px;
    height: 72px;
    padding: 6px 29px 0 28px;
    color: #9497a9;
    font-weight: 500;
}
.chart-bar button, .multi {
    display: flex;
    align-items: center;
    gap: 8px;
}
.chart-bar .icon {
    width: 20px;
    height: 20px;
}
.chart-bar .icon.tiny {
    width: 12px;
    height: 12px;
}
.intervals {
    display: flex;
    gap: 26px;
    margin-right: 9px;
}
.intervals .active {
    color: #fff;
    font-weight: 600;
}
.intervals button:last-child {
    margin-left: 7px;
}
.candle-btn.candle-btn {
    gap: 10px;
}
.chart-bar .recent {
    margin-left: 5px;
}
.chart-extra {
    display: flex;
    align-items: center;
    gap: 34px;
    margin-left: auto;
}
.multi input {
    appearance: none;
    width: 21px;
    height: 21px;
    border: 2px solid #686b82;
    border-radius: 4px;
}
.chart-body {
    display: grid;
    grid-template-columns: 81px minmax(0, 1fr) 114px;
    grid-template-rows: minmax(0, 1fr) 40px 56px;
    flex: 1;
    min-height: 0;
    color: #9497a9;
}
.plot, .price-axis {
    border-bottom: 2px solid #5a5b6b;
    font-feature-settings: "tnum";
}
.tools {
    display: flex;
    flex-direction: column;
    grid-row: span 3;
    padding: 9px 12px 24px 6px;
    color: #8b8d9f;
}
.tools button {
    display: flex;
    align-items: center;
    justify-content: center;
    height: 52px;
}
.tools .on {
    color: #fff;
}
.tools .last {
    margin-top: auto;
}
.tools hr {
    width: 52px;
    height: 1px;
    margin: 9px auto;
    border: 0;
    background: #5a5b6b;
}
.tool {
    width: 34px;
    height: 34px;
    stroke-width: 1.500;
}
.plot {
    position: relative;
    min-height: 0;
}
.plot svg {
    display: block;
    width: 100%;
    height: 100%;
}
.legend {
    position: absolute;
    top: 10px;
    left: 13px;
}
.legend-pair {
    display: flex;
    align-items: center;
    height: 30px;
    padding-left: 3px;
    font-size: 18px;
}
.coin-over {
    width: 14px;
    height: 14px;
    margin: 14px 2px 0 -11px;
    background: #000;
    font-size: 12px;
}
.legend-price {
    color: #4fb477;
    line-height: 32px;
}
/* order preview sits on its price level */
.preview {
    position: absolute;
    top: 57.800%;
    left: 0;
    display: flex;
    align-items: center;
    height: 30px;
    border: 1px solid #4fb477;
    background: #14111c;
    color: #fff;
    font-family: "DejaVu Sans", sans-serif;
    font-size: 13px;
    font-weight: 700;
    line-height: 28px;
}
.grip {
    height: 18px;
    margin: 0 11px 0 5px;
    border-left: 3px dotted #4fb477;
}
.qty {
    margin-left: 9px;
    padding: 0 8px;
    background: #4fb477;
}
.price-axis {
    position: relative;
    border-left: 2px solid #3b3a48;
    overflow: hidden;
}
.prices {
    display: flex;
    flex-direction: column;
    margin-top: -39px;
}
.prices span {
    height: 79px;
    padding-left: 10px;
    line-height: 79px;
}
.price-tags {
    position: absolute;
    top: 55.800%;
    left: -2px;
    display: flex;
    flex-direction: column;
    width: 107px;
    color: #fff;
}
.price-tags span {
    height: 25px;
    padding-left: 12px;
    border-radius: 0 3px 3px 0;
    background: #4fb477;
    line-height: 24px;
}
.scale-buttons {
    position: absolute;
    right: 26px;
    bottom: 6px;
    display: flex;
    gap: 6px;
}
.scale-buttons button {
    width: 29px;
    height: 32px;
    border: 2px solid #5a5b6b;
    border-radius: 6px;
    color: #d5d6dd;
}
.time-axis {
    position: relative;
    display: grid;
    grid-template-columns: repeat(10, minmax(0, 1fr));
    align-items: center;
    margin-right: -36px;
    padding-left: 20px;
    text-align: center;
    font-size: 18px;
    line-height: 40px;
}
.time-axis em {
    position: absolute;
    top: -22px;
    left: -12px;
    color: #fff;
    font-style: normal;
}
.axis-corner {
    display: flex;
    align-items: center;
    justify-content: center;
    border-left: 2px solid #3b3a48;
    color: #d5d6dd;
}
.axis-corner .icon {
    width: 22px;
    height: 22px;
}
.range-bar {
    display: flex;
    align-items: center;
    gap: 25px;
    grid-column: 2 / 4;
    padding: 4px 33px 0 26px;
    font-weight: 500;
}
.range-bar button {
    display: flex;
}
.range-bar button:nth-child(8) {
    margin-left: 7px;
}
.clock {
    margin-left: auto;
    font-feature-settings: "tnum";
}

/* order book */
.book-panel {
    padding: 12px 0 0;
}
.book-panel .tabs, .grouping {
    padding-left: 11px;
}
.book-panel .tabs {
    padding-right: 12px;
}
.book-panel .chip.add {
    width: 42px;
}
.tab-scroll {
    display: flex;
    gap: 6px;
    width: 310px;
    margin-right: 5px;
    overflow: hidden;
}
.book-panel .panel-tools {
    gap: 22px;
}
.grouping {
    display: flex;
    gap: 6px;
    margin-top: 11px;
}
.grouping .off {
    background: #191622;
    color: #5a5b6b;
}
.step {
    gap: 16px;
    background: #201e2b;
    color: #fff;
}
.step .icon {
    color: #9497a9;
}
.book {
    flex: 1;
    width: 100%;
    margin: 5px 0 41px;
    border-spacing: 0;
    table-layout: fixed;
    text-align: right;
}
.book th {
    height: 34px;
    padding: 0;
    color: #9497a9;
    font-size: 15px;
    font-weight: 500;
}
.book th:first-child {
    width: 161px;
    padding-left: 11px;
    text-align: left;
}
.book th:nth-child(2) {
    width: 167px;
    padding-right: 8px;
}
.book th:nth-child(3) {
    padding-right: 46px;
}
.book td {
    padding: 0;
}
.book td:nth-child(3) {
    padding-right: 38px;
}
.book .depth {
    background: linear-gradient(var(--side), var(--side)) no-repeat 0 0 / var(--depth) calc(100% - 2px);
}
#asks {
    --side: #4a222d;
}
#asks td:first-child {
    color: #f4707e;
}
#bids {
    --side: #1f352d;
}
#bids td:first-child {
    color: #57d48a;
}
.book .spread td {
    background: #1f1d2a;
    color: #9497a9;
    text-align: center;
}
.spread b {
    font-weight: 500;
}

/* balances */
.balances {
    width: calc(100% + 12px);
    margin: 0 0 0 -12px;
    border-spacing: 0;
    table-layout: fixed;
    text-align: right;
    white-space: nowrap;
    font-weight: 500;
}
.balances .c-ticker { width: 142px; }
.balances .c-alloc { width: 223px; }
.balances .c-wide { width: 263px; }
.balances .c-change { width: 218px; }
.balances .c-bal { width: 186px; }
.balances .c-menu { width: 92px; }
.balances th, .balances td {
    height: 53px;
    padding: 0;
}
.balances th {
    height: 46px;
    padding-top: 10px;
    color: #9497a9;
    font-size: 15px;
    font-weight: 500;
}
.balances .l {
    text-align: left;
}
.balances .l:first-child {
    padding-left: 20px;
}
.balances th .icon {
    width: 18px;
    height: 18px;
    margin-right: 2px;
    vertical-align: -4px;
}
.group .icon.tiny {
    margin: 0 7px 0 7px;
    width: 11px;
    height: 11px;
    color: #9497a9;
}
.asset {
    display: flex;
    align-items: center;
    gap: 5px;
}
.asset .coin {
    margin-right: 6px;
}
.alloc {
    display: flex;
    align-items: center;
    justify-content: flex-end;
    gap: 10px;
}
.meter {
    width: 92px;
    height: 6px;
    border-radius: 3px;
    background: #2a2837;
}
.fill {
    display: block;
    height: 6px;
    border-radius: 3px;
    background: #f29a38;
}
.fill.gray {
    background: #a5a7b6;
}
.balances .menu .icon {
    width: 18px;
    height: 18px;
    margin-right: 10px;
    vertical-align: middle;
    color: #d5d6dd;
}
.scrollbar {
    position: absolute;
    top: 76px;
    right: 0;
    bottom: 0;
    width: 5px;
    border-radius: 3px 3px 0 0;
    background: #454353;
}
```
FILE: chart.js
```javascript
// hourly candles: high, body top, body bottom, low, up (1) or down (0)
// values are steps below 104,644.0 with 150.6 steps per 1,000 EUR
const candles = [
    [598,604,606,725,1],[579,605,716,716,0],[613,634,716,716,1],[629,633,736,760,0],[690,692,736,828,1],[650,660,690,690,1],
    [655,660,690,730,1],[571,604,690,715,1],[537,604,619,621,0],[481,482,617,640,1],[461,482,541,571,0],[432,474,541,577,1],
    [474,475,690,706,0],[549,595,660,660,1],[512,557,596,601,1],[497,516,558,558,1],[497,516,580,595,0],[541,578,580,585,0],
    [516,516,585,585,1],[452,479,517,517,1],[477,479,542,542,0],[459,487,542,544,1],[371,448,489,489,1],[404,432,449,474,1],
    [403,422,432,469,1],[400,400,422,523,1],[336,336,400,412,1],[336,336,376,409,0],[376,376,486,486,0],[323,342,474,601,1],
    [338,338,413,465,0],[342,411,475,483,0],[374,381,472,474,1],[323,366,381,388,1],[285,352,367,391,1],[342,352,384,427,0],
    [354,380,382,417,1],[354,363,384,436,1],[337,361,363,379,1],[207,207,363,371,1],[173,182,207,293,1],[173,184,569,569,0],
    [471,567,618,958,0],[617,618,920,1156,0],[878,922,1152,1186,0],[988,1038,1153,1171,1],[813,855,1039,1048,1],[824,857,870,935,0],
    [748,820,876,926,1],[738,802,821,832,1],[-187,88,803,826,1],[-187,88,152,171,0],[-37,-36,151,151,1],[-145,-36,-7,54,0],
    [-88,-8,22,45,0],[-49,-7,22,50,1],[-66,-7,178,391,0],[85,138,178,210,1],[113,138,171,231,0],[170,170,569,663,0],
    [271,327,570,760,1],[317,327,832,1183,0],[619,704,832,881,1],[704,704,790,880,0],[700,778,780,835,0],[728,783,934,934,0],
    [763,783,934,1042,1],[780,783,1000,1060,0],[948,991,1076,1078,0],[932,1028,1073,1220,1],[870,905,1035,1092,1],[817,845,905,932,1],
    [845,845,948,1000,0],[917,938,1062,1064,0],[932,938,1062,1100,1],[895,934,958,987,0],[885,893,958,994,1],[820,827,893,920,1],
    [745,768,828,846,1],[640,670,770,770,1],[549,569,670,694,1],[512,560,607,615,0],[512,606,797,818,0],[700,709,797,850,1],
    [350,592,709,722,1],[398,412,593,606,1],[280,324,412,452,1],[278,284,325,412,1],[278,284,418,446,0],[330,333,420,466,1],
    [331,333,442,443,0],[388,398,442,503,1],[392,399,452,471,0],[393,452,461,508,0],[413,455,490,492,0],[441,483,489,489,1],
    [460,483,497,536,0],[451,477,498,506,1],[440,476,508,524,0],[479,507,558,567,0],[533,551,558,615,1],[552,552,624,624,0],
    [599,603,623,662,1],[551,602,608,655,0],[526,563,608,608,1],[556,563,730,762,0],[592,683,730,773,1],[563,671,674,715,1]
];

const asks = [
    ['100,304.4', '0.30000000', '7.10458034'],
    ['100,303.0', '2.39254729', '6.80458034'],
    ['100,300.9', '2.39259822', '4.41203305'],
    ['100,291.3', '1.53320000', '2.01943483'],
    ['100,282.6', '0.28756000', '0.48623483'],
    ['100,281.5', '0.01730065', '0.19867483'],
    ['100,276.1', '0.10840023', '0.18137418'],
    ['100,270.1', '0.01599851', '0.07297395'],
    ['100,256.0', '0.00007500', '0.05697544'],
    ['100,247.7', '0.03832247', '0.05690044'],
    ['100,246.3', '0.00098984', '0.01857797'],
    ['100,246.2', '0.01721763', '0.01758813'],
    ['100,239.6', '0.00037050', '0.00037050']
];

const bids = [
    ['100,234.3', '0.54668852', '0.54668852'],
    ['100,234.2', '0.03002100', '0.57670952'],
    ['100,221.6', '0.14349904', '0.72020856'],
    ['100,219.7', '0.04443074', '0.76463930'],
    ['100,217.3', '0.23000000', '0.99463930'],
    ['100,215.4', '0.14349904', '1.13813834'],
    ['100,214.5', '0.02879434', '1.16693268'],
    ['100,208.2', '0.00949760', '1.17643028'],
    ['100,208.1', '0.04443074', '1.22086102'],
    ['100,205.8', '0.03947498', '1.26033600'],
    ['100,197.8', '0.01593964', '1.27627564'],
    ['100,196.5', '0.20000000', '1.47627564'],
    ['100,184.9', '0.20000000', '1.67627564']
];

const green = '#4fb477';
const red = '#ea4a5f';

function y(steps) {
    return steps * 0.523 + 188;
}

function drawChart() {
    let svg = '';
    for (let i = 0; i < 12; i++) {
        svg += `<path d="M0 ${2 + i * 78.85}H1220" stroke="#1c1926" stroke-width="2"/>`;
    }
    for (let i = 0; i < 10; i++) {
        svg += `<path d="M${82 + i * 123.4} 0V900" stroke="#1c1926" stroke-width="2"/>`;
    }
    candles.forEach(([high, top, bottom, low, up], i) => {
        const x = i * 10.28;
        const color = up ? green : red;
        svg += `<rect x="${x - 0.5}" y="${y(high)}" width="1.3" height="${(low - high) * 0.523}" fill="${color}"/>`;
        svg += `<rect x="${x - 3.5}" y="${y(top)}" width="7.2" height="${Math.max((bottom - top) * 0.523, 1)}" fill="${color}"/>`;
    });
    svg += `<path d="M0 535.5H1220" stroke="${green}" stroke-width="1.3" stroke-dasharray="7 7"/>`;
    svg += `<path d="M0 538.5H1220" stroke="${green}" stroke-width="1.3" stroke-dasharray="1.5 2"/>`;
    document.getElementById('candles').innerHTML = svg;
}

function fillBook(id, rows) {
    const max = 7.10458034;
    document.getElementById(id).innerHTML = rows.map(([price, quantity, total]) => `
        <tr class="depth" style="--depth: ${(total / max * 100).toFixed(1)}%">
            <td class="num">${price}</td><td class="num">${quantity}</td><td class="num">${total}</td>
        </tr>`).join('');
}

drawChart();
fillBook('asks', asks);
fillBook('bids', bids);
```
